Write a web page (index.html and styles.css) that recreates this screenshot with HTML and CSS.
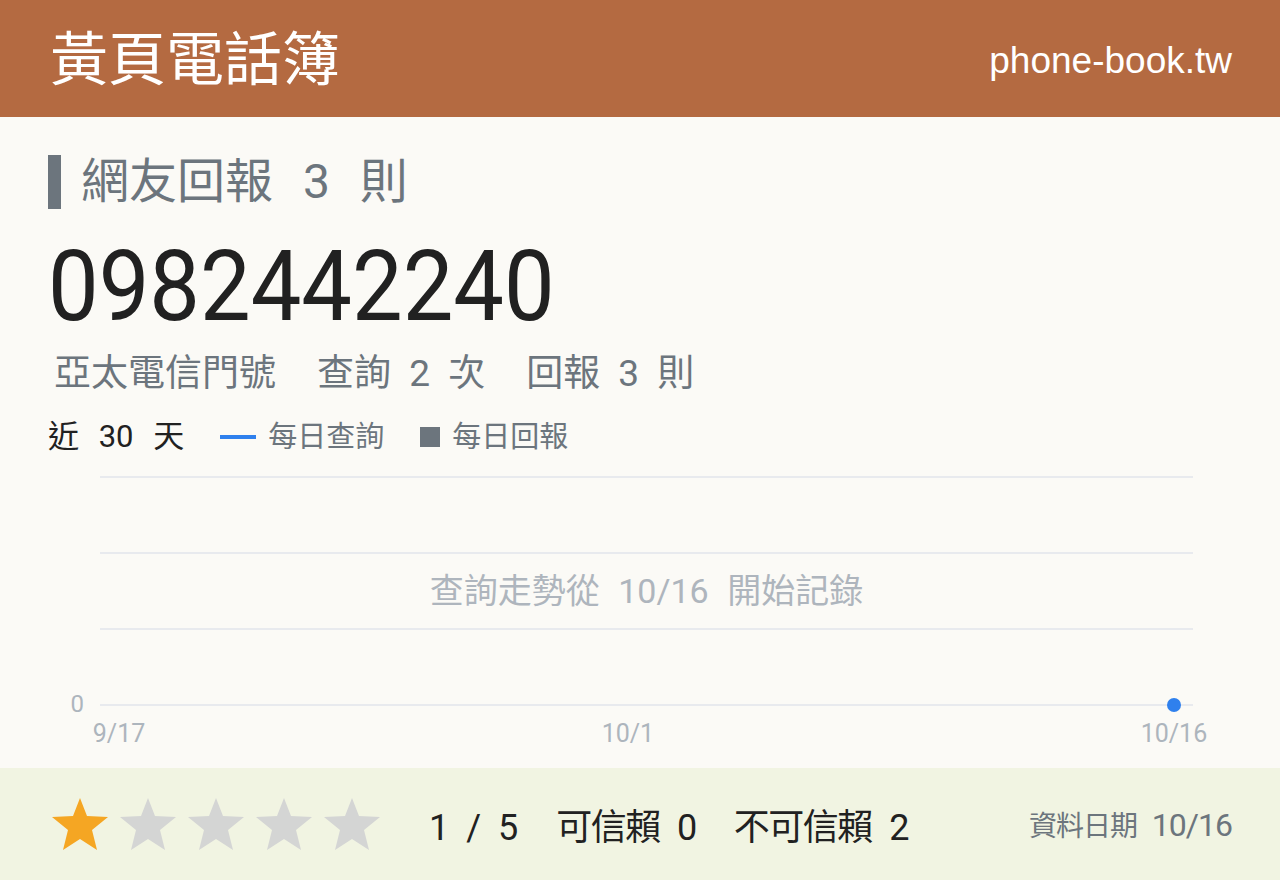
FILE: index.html
```html
<!DOCTYPE html>
<html lang="zh-Hant">
<head>
  <meta charset="UTF-8" />
  <meta name="viewport" content="width=device-width, initial-scale=1.0" />
  <title>0982442240 - 黃頁電話簿</title>
  <link rel="stylesheet" href="styles.css">
</head>
<body>
  <header class="topbar">
    <div class="brand">黃頁電話簿</div>
    <div class="site">phone-book.tw</div>
  </header>

  <main class="content">
    <h2 class="section-title">網友回報 3 則</h2>
    <h1 class="number">0982442240</h1>
    <div class="summary">
      <span>亞太電信門號</span>
      <span>查詢 2 次</span>
      <span>回報 3 則</span>
    </div>

    <div class="legend">
      <span class="range">近 30 天</span>
      <span class="key"><i class="swatch line"></i>每日查詢</span>
      <span class="key"><i class="swatch box"></i>每日回報</span>
    </div>

    <div class="chart">
      <div class="y-axis"><span>0</span></div>
      <div class="plot">
        <div class="grid">
          <div class="gridline"></div>
          <div class="gridline"></div>
          <div class="gridline"></div>
          <div class="gridline"></div>
        </div>
        <div class="empty-note">查詢走勢從 10/16 開始記錄</div>
        <div class="point" style="left: 98.26%"></div>
        <div class="x-axis">
          <span style="left: 1.74%">9/17</span>
          <span style="left: 48.3%">10/1</span>
          <span style="left: 98.26%">10/16</span>
        </div>
      </div>
    </div>
  </main>

  <footer class="rating">
    <div class="stars">
      <svg class="star on" viewBox="0 0 56 52"><polygon points="28,0 35,18 56,19 40,32 45,52 28,41 11,52 16,32 0,19 21,18"/></svg>
      <svg class="star" viewBox="0 0 56 52"><polygon points="28,0 35,18 56,19 40,32 45,52 28,41 11,52 16,32 0,19 21,18"/></svg>
      <svg class="star" viewBox="0 0 56 52"><polygon points="28,0 35,18 56,19 40,32 45,52 28,41 11,52 16,32 0,19 21,18"/></svg>
      <svg class="star" viewBox="0 0 56 52"><polygon points="28,0 35,18 56,19 40,32 45,52 28,41 11,52 16,32 0,19 21,18"/></svg>
      <svg class="star" viewBox="0 0 56 52"><polygon points="28,0 35,18 56,19 40,32 45,52 28,41 11,52 16,32 0,19 21,18"/></svg>
    </div>
    <div class="scores">
      <span class="score">1 / 5</span>
      <span>可信賴 0</span>
      <span>不可信賴 2</span>
    </div>
    <div class="updated">資料日期 <b>10/16</b></div>
  </footer>
</body>
</html>
```

FILE: styles.css
```css
html, body {
  margin: 0;
  height: 100%;
}

body {
  font-family: Roboto, "Noto Sans CJK TC", sans-serif;
  background-color: #fbfaf6;
  color: #212121;
  display: flex;
  flex-direction: column;
  overflow: hidden;
}

.topbar {
  height: 117px;
  background-color: #b46a41;
  color: #fff;
  display: flex;
  align-items: center;
  justify-content: space-between;
  padding: 0 48px 0 50px;
}

.brand {
  font-size: 58px;
  line-height: 1;
  margin-top: 3px;
}

.site {
  font-family: "Liberation Sans", Arial, sans-serif;
  font-size: 37px;
  margin-top: 4px;
}

.content {
  flex: 1;
  padding: 38px 48px 0 48px;
}

.section-title {
  margin: 0;
  font-weight: normal;
  font-size: 48px;
  line-height: 54px;
  color: #6c757d;
  border-left: 13px solid #6c757d;
  padding-left: 20px;
  word-spacing: 18px;
}

/* digits are drawn a little narrower than Roboto's own width */
.number {
  margin: 23px 0 0 0;
  font-weight: normal;
  font-size: 98px;
  line-height: 110px;
  transform: scaleX(0.92);
  transform-origin: left center;
}

.summary {
  display: flex;
  align-items: baseline;
  gap: 41px;
  margin: 8px 0 0 6px;
  font-size: 37px;
  line-height: 48px;
  color: #6c757d;
  word-spacing: 9px;
}

.legend {
  display: flex;
  align-items: center;
  gap: 36px;
  margin-top: 17px;
  line-height: 44px;
}

.range {
  font-size: 31px;
  word-spacing: 12px;
}

.key {
  display: flex;
  align-items: center;
  gap: 12px;
  font-size: 29px;
  color: #6c757d;
}

.swatch {
  display: inline-block;
  background-color: #6c757d;
}

.swatch.line {
  width: 36px;
  height: 4px;
  background-color: #2f80ed;
}

.swatch.box {
  width: 20px;
  height: 20px;
}

.chart {
  display: grid;
  grid-template-columns: 52px 1fr;
  margin: 17px 39px 0 0;
}

.y-axis {
  display: flex;
  align-items: flex-end;
  justify-content: flex-end;
  padding-right: 16px;
  color: #adb5bd;
  font-size: 24px;
  line-height: 1;
}

.y-axis span {
  transform: translateY(10px);
}

.plot {
  position: relative;
  height: 230px;
}

.grid {
  height: 100%;
  display: flex;
  flex-direction: column;
  justify-content: space-between;
}

.gridline {
  height: 2px;
  background-color: #e8eaee;
}

.empty-note {
  position: absolute;
  left: 0;
  right: 0;
  top: 95px;
  text-align: center;
  font-size: 34px;
  line-height: 40px;
  color: #aeb5bd;
  word-spacing: 10px;
}

.point {
  position: absolute;
  bottom: -6px;
  width: 14px;
  height: 14px;
  margin-left: -7px;
  border-radius: 50%;
  background-color: #2f80ed;
}

.x-axis {
  position: absolute;
  left: 0;
  right: 0;
  top: 100%;
  margin-top: 15px;
  font-size: 25px;
  line-height: 1;
  color: #adb5bd;
}

.x-axis span {
  position: absolute;
  transform: translateX(-50%);
}

.rating {
  height: 112px;
  background-color: #f1f4e2;
  display: flex;
  align-items: center;
  padding: 0 48px 0 52px;
}

.stars {
  display: flex;
  gap: 12px;
}

.star {
  width: 56px;
  height: 52px;
  fill: #d4d5d4;
}

.star.on {
  fill: #f5a623;
}

.scores {
  display: flex;
  align-items: baseline;
  gap: 38px;
  margin-left: 49px;
  font-size: 36px;
  letter-spacing: -1.5px;
  word-spacing: 10px;
}

.scores .score {
  letter-spacing: 0;
  word-spacing: 8px;
}

.updated {
  margin-left: auto;
  font-size: 28px;
  color: #6c757d;
  letter-spacing: -1px;
  word-spacing: 9px;
}

.updated b {
  font-weight: normal;
  font-size: 32px;
}
```
